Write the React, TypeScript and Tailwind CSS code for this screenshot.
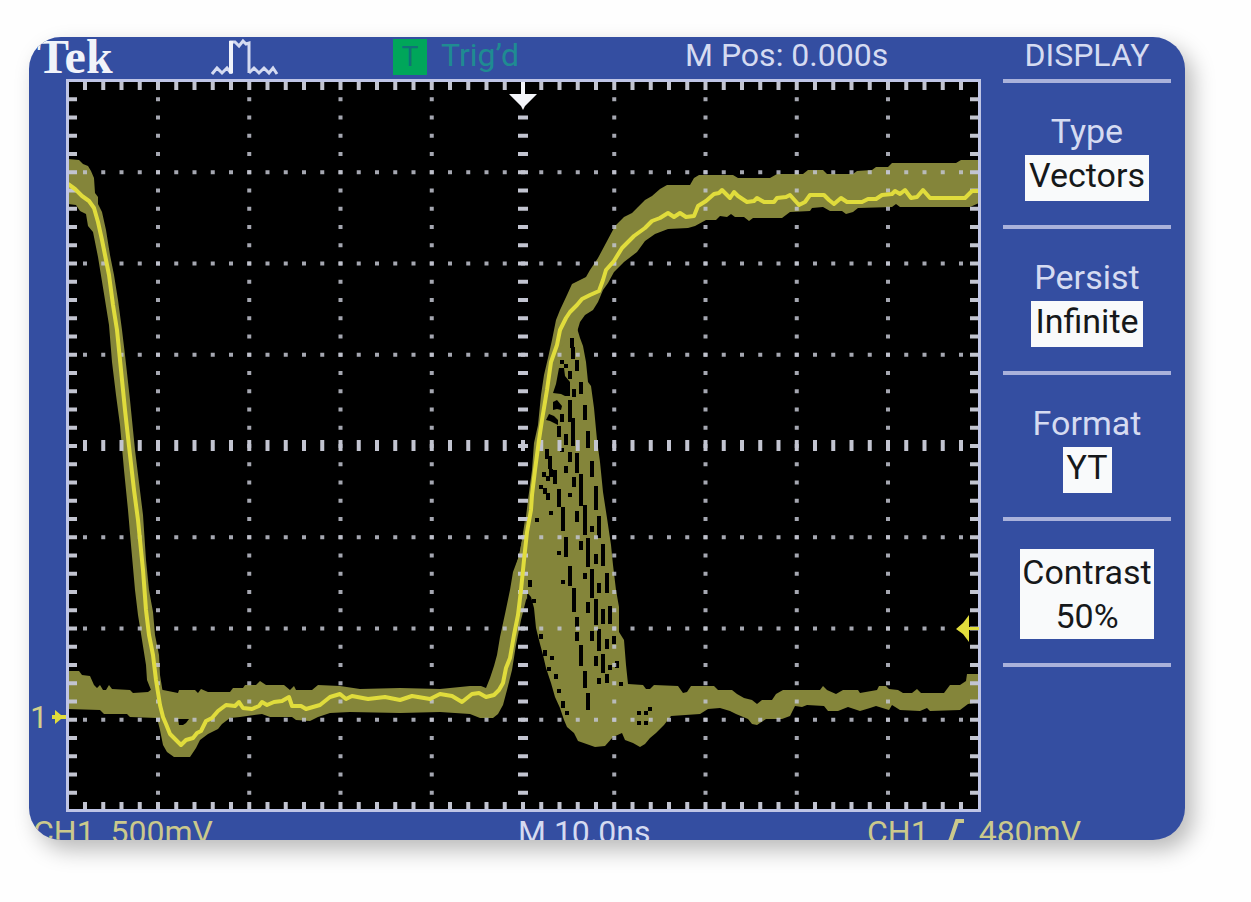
import React from 'react';

// The trace area is drawn in screen units: 10 x 8 divisions around (CX, CY)
const VIEW = { x: 66, y: 79, w: 915, h: 733 };
const CX = 523;
const CY = 446;
const STEP = 18.25;

const columns = Array.from({ length: 49 }, (_, i) => i - 24);
const rows = Array.from({ length: 39 }, (_, i) => i - 19);

const menu = [
  { label: 'Type', value: 'Vectors' },
  { label: 'Persist', value: 'Infinite' },
  { label: 'Format', value: 'YT' },
];

// Everything the trace has touched since persistence was switched on
const fallingEdge =
  '68,159 79,160 83,164 88,166 91,171 94,178 95,193 98,197 98,204 102,212 106,230 110,255 114,275 118,300 122,330 125,355 130,400 135,450 143,515 146,560 149,590 153,612 155,635 159,655 160,675 164,700 164,720 157,718 151,690 147,680 146,665 142,640 138,615 135,590 131,545 128,510 124,470 120,425 116,395 112,362 109,325 105,300 98,257 93,232 88,226 86,214 80,211 76,205 68,204';
const leftFloor =
  '68,671 79,671 82,675 90,676 94,685 97,688 100,685 103,690 106,690 109,685 112,689 130,690 133,693 148,692 152,689 157,688 163,690 178,693 179,690 195,690 198,693 201,689 208,692 230,692 233,688 243,688 245,685 256,685 260,681 266,685 284,685 290,690 294,686 296,690 312,690 318,685 340,686 360,689 400,688 440,689 470,686 481,686 486,688 490,678 494,666 497,655 500,637 505,614 510,590 513,572 519,556 522,540 525,520 526,600 521,620 516,645 512,670 507,690 503,705 498,714 493,718 480,718 470,714 440,712 400,713 350,712 330,713 318,717 310,721 296,720 292,717 270,717 262,714 240,717 230,718 222,724 218,729 208,734 200,740 196,748 190,757 174,757 167,752 163,745 160,730 157,718 130,717 127,714 104,714 100,710 68,709';
const risingEdge =
  '513,575 519,556 525,525 528,500 532,470 534,443 538,425 541,395 544,375 548,358 552,340 556,320 560,310 567,295 572,284 586,277 590,270 598,258 606,243 615,226 624,217 632,213 638,207 645,200 652,196 660,189 667,185 690,185 694,178 699,175 733,175 738,178 770,178 777,174 803,174 808,170 823,170 827,174 853,174 857,171 872,170 876,167 888,167 892,163 956,163 961,160 979,160 979,203 970,207 900,207 896,204 892,207 858,208 853,212 846,214 842,211 830,211 823,207 812,208 810,211 790,212 782,218 753,218 749,221 744,217 735,217 731,214 727,217 720,216 716,220 706,220 695,226 688,228 668,229 655,234 645,241 637,252 624,262 614,272 608,283 603,290 598,302 593,310 585,315 580,322 577,332 560,350 550,400 540,460 530,530 527,600';
const jitterCone =
  '577,328 580,338 583,346 586,362 588,382 591,386 594,408 597,440 600,462 603,492 607,518 611,545 613,565 616,590 619,607 619,632 624,640 626,665 628,684 643,685 646,689 650,689 654,685 678,686 683,693 687,692 691,686 714,686 718,690 732,690 737,694 744,698 752,700 757,704 762,700 772,700 776,694 783,690 820,690 823,686 827,690 836,694 843,690 858,690 860,693 877,690 879,686 886,686 889,689 898,690 903,693 912,693 917,689 921,693 944,693 950,685 960,685 966,681 967,674 979,674 979,702 968,704 960,710 930,711 927,708 920,711 900,710 892,705 889,710 876,706 870,708 860,711 848,707 838,711 828,711 824,706 807,705 802,707 795,706 790,716 782,719 766,719 757,725 752,724 748,719 736,714 730,711 720,708 708,709 700,714 671,716 664,725 656,733 650,738 645,744 640,747 633,743 625,740 622,733 613,737 605,746 595,747 578,741 574,733 567,727 564,720 560,708 555,697 551,683 546,668 543,655 540,644 536,628 534,608 531,597 525,590 527,540 536,470 548,395 558,350';

const liveTrace =
  '68,184 75,189 82,196 89,201 94,208 98,222 102,240 105,255 109,275 113,305 117,330 120,360 125,410 130,455 134,490 138,520 143,570 146,610 149,635 153,655 156,680 160,705 163,717 166,724 170,734 176,740 181,745 186,740 193,738 197,733 201,731 206,721 212,718 218,711 226,705 235,706 239,702 243,708 252,709 259,706 262,702 267,705 274,702 282,701 289,697 292,706 301,706 306,709 320,705 330,697 340,694 346,699 352,696 368,699 385,697 400,700 412,696 430,699 440,694 452,696 462,702 472,694 479,693 486,697 494,695 499,690 503,683 506,668 510,658 514,635 518,615 521,590 524,560 527,532 531,510 532,495 535,470 539,440 542,420 547,390 551,362 557,345 560,330 566,318 570,312 577,305 582,299 590,295 599,291 603,280 606,270 614,261 622,248 634,236 645,228 652,221 660,218 668,213 674,217 680,213 686,217 694,216 698,206 706,201 714,194 719,193 722,190 730,198 734,192 738,196 747,202 754,201 757,198 764,202 774,202 777,198 786,197 790,195 799,205 805,202 810,195 824,195 829,200 834,204 841,198 847,202 862,202 868,199 876,199 882,195 892,194 895,191 900,194 905,190 911,198 917,197 923,190 930,198 965,198 972,191 979,191';

// Gaps in the jitter cone: x, y, height
const gaps: [number, number, number][] = [
  [572, 338, 10], [573, 347, 12], [577, 360, 11], [562, 360, 4], [566, 364, 4], [570, 371, 8],
  [581, 382, 12], [574, 389, 8], [585, 405, 15], [562, 414, 8], [559, 426, 11], [566, 434, 11],
  [570, 400, 22], [573, 418, 28], [588, 431, 17], [562, 448, 4], [547, 449, 10], [550, 456, 13],
  [570, 452, 10], [577, 453, 20], [566, 466, 7], [592, 461, 16], [555, 470, 14], [581, 474, 32],
  [544, 472, 5], [548, 476, 5], [551, 469, 8], [574, 477, 10], [596, 486, 24], [541, 485, 4],
  [545, 488, 6], [548, 493, 7], [559, 489, 18], [570, 493, 4], [551, 511, 4], [563, 507, 24],
  [577, 511, 11], [585, 505, 30], [537, 518, 4], [592, 526, 6], [599, 516, 22], [566, 537, 20],
  [581, 541, 9], [588, 538, 29], [559, 551, 4], [603, 544, 22], [596, 554, 10], [530, 580, 7],
  [570, 566, 20], [563, 580, 4], [585, 573, 6], [592, 569, 29], [599, 583, 10], [607, 573, 20],
  [534, 599, 4], [574, 588, 24], [588, 602, 11], [596, 599, 26], [603, 609, 15], [610, 606, 18],
  [577, 617, 10], [577, 632, 9], [541, 634, 5], [592, 631, 10], [599, 629, 22], [607, 639, 10],
  [614, 636, 8], [581, 645, 21], [545, 650, 6], [552, 656, 4], [596, 656, 10], [603, 654, 19],
  [610, 665, 5], [617, 661, 7], [549, 667, 4], [556, 674, 5], [585, 671, 17], [599, 678, 6],
  [607, 674, 9], [621, 682, 4], [559, 689, 4], [588, 693, 17], [563, 701, 7], [567, 711, 4],
  [639, 711, 4], [646, 711, 4], [650, 707, 4], [639, 721, 4], [646, 721, 4],
];

function Graticule() {
  return (
    <g fill="#c2c4d0">
      {rows.map((r) =>
        [-4, -3, -2, -1, 1, 2, 3, 4].map((c) => (
          <rect key={`v${r}/${c}`} x={CX + c * 5 * STEP - 2} y={CY + r * STEP - 2} width="4" height="4" opacity="0.85" />
        ))
      )}
      {columns.map((c) =>
        [-3, -2, -1, 1, 2, 3].map((r) => (
          <rect key={`h${c}/${r}`} x={CX + c * STEP - 2} y={CY + r * 5 * STEP - 2} width="4" height="4" opacity="0.85" />
        ))
      )}
      {/* Centre axes */}
      {rows.map((r) => (
        <rect key={`ay${r}`} x={CX - 5} y={CY + r * STEP - 2} width="10" height="4" />
      ))}
      {columns.map((c) => (
        <rect key={`ax${c}`} x={CX + c * STEP - 2} y={CY - 6} width="4" height="11" />
      ))}
      {/* Ticks along the frame */}
      {columns.map((c) => (
        <g key={`tx${c}`}>
          <rect x={CX + c * STEP - 2} y="82" width="4" height="8" />
          <rect x={CX + c * STEP - 2} y="802" width="4" height="8" />
        </g>
      ))}
      {rows.map((r) => (
        <g key={`ty${r}`}>
          <rect x="68" y={CY + r * STEP - 2} width="9" height="4" />
          <rect x="970" y={CY + r * STEP - 2} width="9" height="4" />
        </g>
      ))}
    </g>
  );
}

function Screen() {
  return (
    <svg
      viewBox={`${VIEW.x} ${VIEW.y} ${VIEW.w} ${VIEW.h}`}
      className="block w-full bg-black"
      role="img"
      aria-label="Channel 1 waveform"
    >
      <g fill="#84853a">
        <polygon points={fallingEdge} />
        <polygon points={leftFloor} />
        <polygon points={risingEdge} />
        <polygon points={jitterCone} />
      </g>
      <g fill="#000">
        {gaps.map(([x, y, h], i) => (
          <rect key={i} x={x - 2} y={y} width="4" height={h} />
        ))}
        <path d="M559 368h5l1 8 5 6v14h-5l-4-2-8-1 3-9z" />
        <path d="M553 402l4-2 5 6-1 4-4-1-4 1zM549 414l5 2 4 4v5l-8-4-4-1z" />
        <path d="M178 719h11l-3 4-3 2h-4z" />
      </g>
      <Graticule />
      <polyline points={liveTrace} fill="none" stroke="#e0dc3c" strokeWidth="4" strokeLinejoin="round" />
      <rect x="67.5" y="80.5" width="912" height="730" fill="none" stroke="#bfc5e6" strokeWidth="3" />
      {/* Trigger position and level */}
      <path d="M521 82h4v12h12l-12 12-2 4-2-4-12-12h12z" fill="#f4f5fa" />
      <path d="M956 629l7-6 6-8v12h10v3h-10v12l-6-8z" fill="#e0dc3c" />
    </svg>
  );
}

const App: React.FC = () => {
  return (
    <div className="min-h-screen bg-[#fefefe] pt-[37px] pr-[66px] pb-[62px] pl-[29px]">
      <div className="overflow-hidden rounded-[32px] bg-[#344ea1] font-['Roboto',sans-serif] text-[32px] leading-10 whitespace-nowrap text-[#d5dbf1] shadow-[8px_10px_22px_rgba(0,0,0,0.27)]">
        <div className="grid grid-cols-[minmax(0,1fr)_204px]">
          <div>
            {/* Status bar */}
            <header className="grid h-[42px] grid-cols-[182fr_182fr_292fr_296fr] leading-9">
              <h1 className="pl-2 font-['Liberation_Serif',serif] text-[48px] leading-10 font-bold text-[#f1f3fa]">Tek</h1>
              <svg viewBox="0 0 68 42" className="h-[42px] w-[68px]" fill="none" stroke="#d5dbf1" aria-label="Acquisition mode">
                <path d="M1 37l5-6 5 5 5-5 4 5M38 36l5-5 5 5 5-5 5 5 4-5 4 6" strokeWidth="3" />
                <path d="M20 37V5h4l4 4 4-5 3 3 3-1v30" strokeWidth="3" />
                <path d="M20 36V4" strokeWidth="4" stroke="#f1f3fa" />
              </svg>
              <div className="flex gap-3.5 text-[#1f8b92]">
                <span className="mt-0.5 h-9 w-[34px] bg-[#00a65a] text-center text-[28px] text-[#116f78]">T</span>
                <span>Trig’d</span>
              </div>
              <div>M Pos: 0.000s</div>
            </header>

            <div className="grid grid-cols-[37px_minmax(0,1fr)]">
              <div className="relative">
                {/* Channel ground marker */}
                <div className="absolute top-[87%] right-0 flex -translate-y-1/2 items-center gap-1 leading-8 text-[#d3d08a]">
                  1
                  <svg viewBox="0 0 14 14" className="h-3.5 w-3.5" fill="#e0dc3c">
                    <path d="M0 5h3V0l6 5h5v4H9l-6 5V9H0z" />
                  </svg>
                </div>
              </div>
              <Screen />
            </div>
          </div>

          {/* Softkey menu */}
          <nav className="pr-3.5 pl-[22px] text-center text-[34px]">
            <h2 className="h-[42px] text-[32px] leading-9">DISPLAY</h2>
            {menu.map((item) => (
              <button key={item.label} type="button" className="block h-[146px] w-full border-t-4 border-[#aab2db] pt-1">
                <span className="mb-1 block">{item.label}</span>
                <span className="mx-auto block w-fit bg-[#f9fafb] px-1 pb-1.5 text-[#16181a]">{item.value}</span>
              </button>
            ))}
            <button type="button" className="block h-[150px] w-full border-y-4 border-[#aab2db] pt-1">
              <span className="mx-auto block w-fit bg-[#f9fafb] px-0.5 py-px leading-11 text-[#16181a]">
                Contrast
                <br />
                50%
              </span>
            </button>
          </nav>
        </div>

        {/* Readouts */}
        <footer className="grid h-7 grid-cols-[489fr_349fr_318fr] overflow-hidden text-[#cbc98c]">
          <div className="pl-1">CH1&nbsp; 500mV</div>
          <div className="text-[#d5dbf1]">M 10.0ns</div>
          <div className="flex">
            <span>CH1</span>
            <svg viewBox="0 0 22 28" className="mx-3.5 mt-1.5 h-7 w-[22px]" fill="none" stroke="#cbc98c" strokeWidth="4">
              <path d="M0 27h5l3-6 6-18h7" />
            </svg>
            <span>480mV</span>
          </div>
        </footer>
      </div>
    </div>
  );
};

export default App;
